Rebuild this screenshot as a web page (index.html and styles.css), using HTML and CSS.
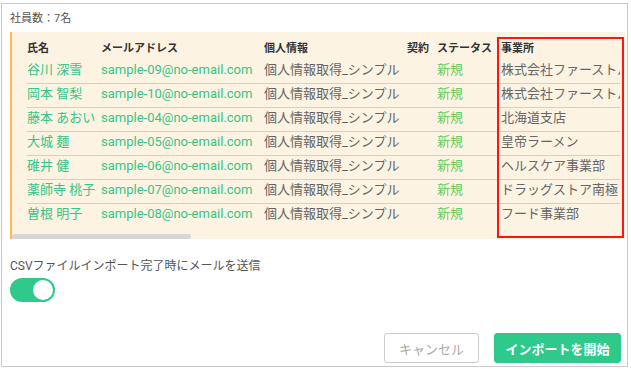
FILE: index.html
```html
<!DOCTYPE html>
<html lang="ja">
<head>
<meta charset="utf-8">
<link rel="stylesheet" href="styles.css">
</head>
<body>
<div class="frame">
  <div class="count">社員数：7名</div>
  <div class="panel">
    <div class="tablewrap">
      <table class="grid">
        <colgroup>
          <col class="c-name"><col class="c-mail"><col class="c-info"><col class="c-contract"><col class="c-status"><col class="c-office">
        </colgroup>
        <thead>
          <tr><th>氏名</th><th>メールアドレス</th><th>個人情報</th><th>契約</th><th>ステータス</th><th>事業所</th></tr>
        </thead>
        <tbody>
          <tr><td class="g">谷川 深雪</td><td class="g">sample-09@no-email.com</td><td>個人情報取得_シンプル</td><td></td><td class="new">新規</td><td>株式会社ファーストパートナーズ</td></tr>
          <tr><td class="g">岡本 智梨</td><td class="g">sample-10@no-email.com</td><td>個人情報取得_シンプル</td><td></td><td class="new">新規</td><td>株式会社ファーストパートナーズ</td></tr>
          <tr><td class="g">藤本 あおい</td><td class="g">sample-04@no-email.com</td><td>個人情報取得_シンプル</td><td></td><td class="new">新規</td><td>北海道支店</td></tr>
          <tr><td class="g">大城 麺</td><td class="g">sample-05@no-email.com</td><td>個人情報取得_シンプル</td><td></td><td class="new">新規</td><td>皇帝ラーメン</td></tr>
          <tr><td class="g">碓井 健</td><td class="g">sample-06@no-email.com</td><td>個人情報取得_シンプル</td><td></td><td class="new">新規</td><td>ヘルスケア事業部</td></tr>
          <tr><td class="g">薬師寺 桃子</td><td class="g">sample-07@no-email.com</td><td>個人情報取得_シンプル</td><td></td><td class="new">新規</td><td>ドラッグストア南極</td></tr>
          <tr><td class="g">曽根 明子</td><td class="g">sample-08@no-email.com</td><td>個人情報取得_シンプル</td><td></td><td class="new">新規</td><td>フード事業部</td></tr>
        </tbody>
      </table>
    </div>
    <div class="scrollbar"><div class="thumb"></div></div>
  </div>
  <div class="notify">CSVファイルインポート完了時にメールを送信</div>
  <div class="toggle"><span class="knob"></span></div>
  <div class="actions">
    <button class="btn cancel">キャンセル</button>
    <button class="btn primary">インポートを開始</button>
  </div>
</div>
<div class="highlight"></div>
</body>
</html>
```

FILE: styles.css
```css
* { box-sizing: border-box; }
html, body {
  margin: 0;
  padding: 0;
  background: #ffffff;
  font-family: Roboto, "Noto Sans CJK JP", sans-serif;
}
.frame {
  margin: 3px 0 0 1px;
  width: 627px;
  height: 364px;
  border: 1px solid #c9c9c9;
  padding: 8px 1px 2px 8px;
  display: flex;
  flex-direction: column;
}
.count {
  font-size: 11px;
  line-height: 14px;
  color: #555;
  margin-bottom: 6px;
}
.panel {
  background: #fdf3e2;
  border-left: 2px solid #ffb84d;
  padding: 4px 5px 0 15px;
}
.tablewrap {
  overflow: hidden;
  width: 593px;
}
.grid {
  table-layout: fixed;
  border-collapse: collapse;
  width: 700px;
}
.c-name { width: 74px; }
.c-mail { width: 163px; }
.c-info { width: 143px; }
.c-contract { width: 30px; }
.c-status { width: 64px; }
.c-office { width: 226px; }
.grid th {
  text-align: left;
  font-size: 11px;
  font-weight: bold;
  color: #333;
  height: 24px;
  padding: 4px 0 3px;
  line-height: 17px;
  white-space: nowrap;
}
.grid td {
  font-size: 13px;
  color: #666;
  height: 23px;
  padding: 1px 0 5px;
  line-height: 17px;
  white-space: nowrap;
  border-bottom: 1px solid #d4d0c8;
}
.grid tbody tr:last-child td { border-bottom: none; }
.grid td.g { color: #34c58a; }
.grid td.new { color: #66cc66; }
.scrollbar {
  margin: 7px 0 0 -15px;
  height: 5px;
}
.thumb {
  width: 179px;
  height: 5px;
  background: #d7d7d7;
  border-radius: 2px;
}
.notify {
  margin-top: 20px;
  font-size: 12px;
  line-height: 14px;
  color: #555;
}
.toggle {
  margin-top: 5px;
  width: 45px;
  height: 24px;
  border-radius: 12px;
  background: #2fca8b;
  padding: 2px;
  display: flex;
  justify-content: flex-end;
}
.knob {
  width: 20px;
  height: 20px;
  border-radius: 50%;
  background: #ffffff;
}
.actions {
  margin-top: auto;
  display: flex;
  justify-content: flex-end;
  gap: 15px;
  padding-right: 5px;
  padding-bottom: 1px;
}
.btn {
  height: 30px;
  border-radius: 3px;
  font-family: Roboto, "Noto Sans CJK JP", sans-serif;
  font-size: 13px;
  cursor: pointer;
}
.cancel {
  width: 95px;
  background: #fff;
  border: 1px solid #cccccc;
  color: #aaaaaa;
}
.primary {
  width: 127px;
  background: #2fca8b;
  border: 1px solid #2fca8b;
  color: #fff;
  font-weight: bold;
}
.highlight {
  position: absolute;
  left: 497px;
  top: 37px;
  width: 127px;
  height: 201px;
  border: 2px solid #ff1414;
  pointer-events: none;
}
```
